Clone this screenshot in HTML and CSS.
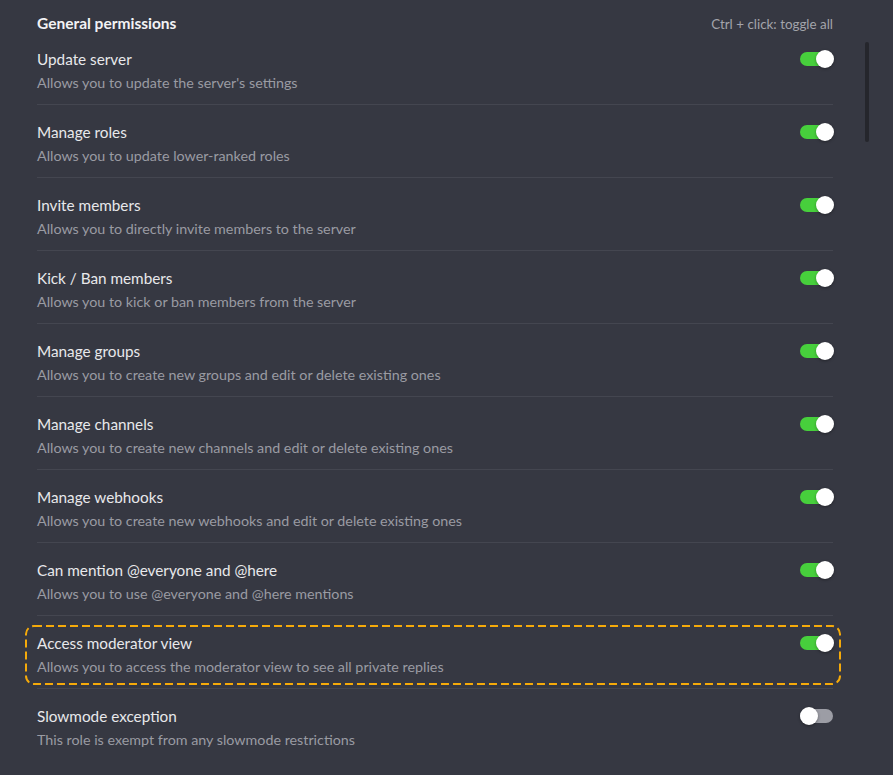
FILE: index.html
```html
<!DOCTYPE html>
<html>
<head>
<meta charset="utf-8">
<link rel="stylesheet" href="styles.css">
</head>
<body>
<div class="page">
  <div class="content">
    <div class="header">
      <span class="header-title">General permissions</span>
      <span class="header-hint">Ctrl + click: toggle all</span>
    </div>
    <div class="row first">
      <div class="row-top"><span class="title">Update server</span><span class="toggle on"></span></div>
      <div class="desc">Allows you to update the server's settings</div>
    </div>
    <div class="row">
      <div class="row-top"><span class="title">Manage roles</span><span class="toggle on"></span></div>
      <div class="desc">Allows you to update lower-ranked roles</div>
    </div>
    <div class="row">
      <div class="row-top"><span class="title">Invite members</span><span class="toggle on"></span></div>
      <div class="desc">Allows you to directly invite members to the server</div>
    </div>
    <div class="row">
      <div class="row-top"><span class="title">Kick / Ban members</span><span class="toggle on"></span></div>
      <div class="desc">Allows you to kick or ban members from the server</div>
    </div>
    <div class="row">
      <div class="row-top"><span class="title">Manage groups</span><span class="toggle on"></span></div>
      <div class="desc">Allows you to create new groups and edit or delete existing ones</div>
    </div>
    <div class="row">
      <div class="row-top"><span class="title">Manage channels</span><span class="toggle on"></span></div>
      <div class="desc">Allows you to create new channels and edit or delete existing ones</div>
    </div>
    <div class="row">
      <div class="row-top"><span class="title">Manage webhooks</span><span class="toggle on"></span></div>
      <div class="desc">Allows you to create new webhooks and edit or delete existing ones</div>
    </div>
    <div class="row">
      <div class="row-top"><span class="title">Can mention @everyone and @here</span><span class="toggle on"></span></div>
      <div class="desc">Allows you to use @everyone and @here mentions</div>
    </div>
    <div class="row">
      <div class="row-body highlighted">
        <svg class="dash" preserveAspectRatio="none"><rect x="1" y="1" rx="8" ry="8" width="calc(100% - 2px)" height="calc(100% - 2px)"></rect></svg>
        <div class="row-top"><span class="title">Access moderator view</span><span class="toggle on"></span></div>
        <div class="desc">Allows you to access the moderator view to see all private replies</div>
      </div>
    </div>
    <div class="row">
      <div class="row-top"><span class="title">Slowmode exception</span><span class="toggle"></span></div>
      <div class="desc">This role is exempt from any slowmode restrictions</div>
    </div>
  </div>
  <div class="scroll-track"><div class="scroll-thumb"></div></div>
</div>
</body>
</html>
```
FILE: styles.css
```css
html, body {
  margin: 0;
  padding: 0;
  background: #363842;
  height: 100%;
  overflow: hidden;
}
body {
  font-family: Lato, "Liberation Sans", sans-serif;
}
.page {
  display: flex;
  padding-left: 37px;
}
.content {
  width: 796px;
}
.header {
  display: flex;
  justify-content: space-between;
  align-items: baseline;
  padding-top: 13px;
  height: 20px;
  line-height: 20px;
}
.header-title {
  color: #f2f2f4;
  font-weight: 700;
  font-size: 15.5px;
}
.header-hint {
  color: #a3a4ab;
  font-size: 13.4px;
}
.row {
  padding: 17px 0 11px;
  border-top: 1px solid #444650;
}
.row.first {
  border-top: none;
  padding-top: 16px;
}
.row-body {
  position: relative;
}
.row-top {
  display: flex;
  justify-content: space-between;
  align-items: center;
  height: 20px;
  margin-bottom: 4px;
}
.title {
  color: #e8e8eb;
  font-size: 15.3px;
  line-height: 20px;
}
.desc {
  color: #9a9ba3;
  font-size: 14.3px;
  line-height: 20px;
}
.toggle {
  position: relative;
  width: 33px;
  height: 14px;
  border-radius: 7px;
  background: #9c9da5;
}
.toggle::after {
  content: "";
  position: absolute;
  top: -2px;
  left: 0;
  width: 18px;
  height: 18px;
  border-radius: 50%;
  background: #ffffff;
  box-shadow: 0 1px 3px rgba(0, 0, 0, 0.35);
}
.toggle.on {
  background: #47cf3c;
}
.toggle.on::after {
  left: auto;
  right: -1px;
}
.dash {
  position: absolute;
  left: -12px;
  top: -8px;
  width: calc(100% + 20px);
  height: calc(100% + 16px);
  overflow: visible;
  pointer-events: none;
}
.dash rect {
  fill: none;
  stroke: #f5aa0a;
  stroke-width: 2;
  stroke-dasharray: 8 4;
}
.scroll-track {
  margin-left: 32px;
  width: 5px;
}
.scroll-thumb {
  margin-top: 42px;
  height: 100px;
  width: 4px;
  border-radius: 2px;
  background: #25262c;
}
```
